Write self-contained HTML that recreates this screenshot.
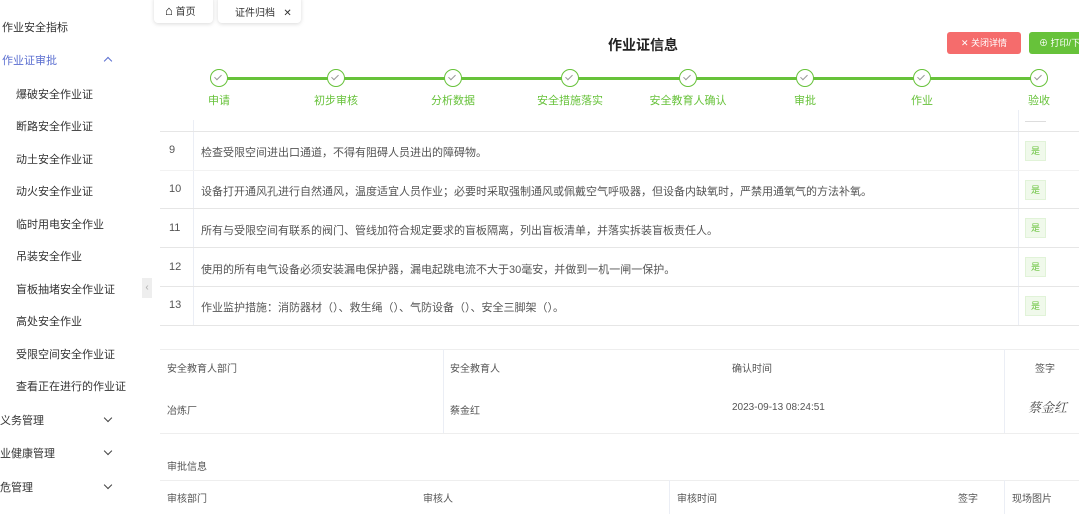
<!DOCTYPE html>
<html><head><meta charset="utf-8"><style>
*{margin:0;padding:0;box-sizing:border-box}
body{width:1079px;height:514px;overflow:hidden;background:#fff;font-family:"Liberation Sans","Noto Sans CJK SC",sans-serif;color:#333;font-size:11px;position:relative}
.a{position:absolute;white-space:nowrap}
.side{font-size:11px;color:#333}
.step{position:absolute;top:69px;width:18px;height:18px;border:1.5px solid #67c23a;border-radius:50%;background:#fff}
.step:after{content:"";position:absolute;left:5px;top:3px;width:3px;height:6px;border-right:1px solid #999;border-bottom:1px solid #999;transform:rotate(45deg)}
.sl{position:absolute;top:92px;color:#67c23a;font-size:11px;transform:translateX(-50%)}
.hl{position:absolute;height:1px;background:#e6e6e6}
.vl{position:absolute;width:1px;background:#ebeef5}
.yes{position:absolute;left:1025px;width:21px;height:20px;background:#f0f9eb;border:1px solid #e1f3d8;color:#67c23a;font-size:9px;text-align:center;line-height:18px}
.t{color:#555}
.chev{position:absolute;width:6px;height:6px;border-right:1.3px solid #444;border-bottom:1.3px solid #444;transform:rotate(45deg)}
.chev.up{transform:rotate(-135deg);border-color:#5a6ed0}
</style></head><body>
<!-- sidebar -->
<div class="a side" style="left:2px;top:19px">作业安全指标</div>
<div class="a side" style="left:2px;top:52px;color:#5a6ed0">作业证审批</div>
<div class="chev up" style="left:105px;top:58px"></div>
<div class="a side" style="left:16px;top:86px">爆破安全作业证</div>
<div class="a side" style="left:16px;top:118px">断路安全作业证</div>
<div class="a side" style="left:16px;top:151px">动土安全作业证</div>
<div class="a side" style="left:16px;top:183px">动火安全作业证</div>
<div class="a side" style="left:16px;top:216px">临时用电安全作业</div>
<div class="a side" style="left:16px;top:248px">吊装安全作业</div>
<div class="a side" style="left:16px;top:281px">盲板抽堵安全作业证</div>
<div class="a side" style="left:16px;top:313px">高处安全作业</div>
<div class="a side" style="left:16px;top:346px">受限空间安全作业证</div>
<div class="a side" style="left:16px;top:378px">查看正在进行的作业证</div>
<div class="a side" style="left:0;top:412px">义务管理</div>
<div class="a side" style="left:0;top:445px">业健康管理</div>
<div class="a side" style="left:0;top:479px">危管理</div>
<div class="chev" style="left:105px;top:415px"></div>
<div class="chev" style="left:105px;top:448px"></div>
<div class="chev" style="left:105px;top:482px"></div>
<div class="a" style="left:142px;top:278px;width:10px;height:20px;background:#eee;color:#aaa;font-size:10px;text-align:center;line-height:20px">&#8249;</div>
<!-- tabs -->
<div class="a" style="left:154px;top:-4px;width:59px;height:27px;border-radius:4px;box-shadow:0 1px 4px rgba(0,0,0,.15);background:#fff;font-size:10px;padding:7px 0 0 11px"><span style="font-size:13px;color:#111">&#8962;</span> 首页</div>
<div class="a" style="left:218px;top:-4px;width:83px;height:27px;border-radius:4px;box-shadow:0 1px 4px rgba(0,0,0,.15);background:#fff;font-size:10px;padding:8px 0 0 17px">证件归档 &nbsp;&nbsp;✕</div>
<!-- title -->
<div class="a" style="left:608px;top:35px;font-size:14px;color:#222;font-weight:bold">作业证信息</div>
<div class="a" style="left:947px;top:32px;width:74px;height:22px;background:#f56c6c;border-radius:3px;color:#fff;font-size:9px;text-align:center;line-height:22px">✕ 关闭详情</div>
<div class="a" style="left:1029px;top:32px;width:60px;height:22px;background:#67c23a;border-radius:3px;color:#fff;font-size:9px;line-height:22px;padding-left:10px">⊕ 打印/下</div>
<!-- steps -->
<div class="a" style="left:220px;top:77px;width:820px;height:3px;background:#67c23a"></div>
<div class="step" style="left:210px"></div><div class="sl" style="left:219px">申请</div>
<div class="step" style="left:327px"></div><div class="sl" style="left:336px">初步审核</div>
<div class="step" style="left:444px"></div><div class="sl" style="left:453px">分析数据</div>
<div class="step" style="left:561px"></div><div class="sl" style="left:570px">安全措施落实</div>
<div class="step" style="left:679px"></div><div class="sl" style="left:688px">安全教育人确认</div>
<div class="step" style="left:796px"></div><div class="sl" style="left:805px">审批</div>
<div class="step" style="left:913px"></div><div class="sl" style="left:922px">作业</div>
<div class="step" style="left:1030px"></div><div class="sl" style="left:1039px">验收</div>
<!-- table -->
<div class="vl" style="left:193px;top:120px;height:205px"></div>
<div class="vl" style="left:1018px;top:110px;height:215px"></div>
<div class="hl" style="left:160px;top:131px;width:919px"></div>
<div class="hl" style="left:160px;top:170px;width:919px;background:#f2f2f2"></div>
<div class="hl" style="left:160px;top:208px;width:919px"></div>
<div class="hl" style="left:160px;top:247px;width:919px"></div>
<div class="hl" style="left:160px;top:286px;width:919px"></div>
<div class="hl" style="left:160px;top:325px;width:919px"></div>
<div class="a t" style="left:169px;top:144px">9</div>
<div class="a t" style="left:201px;top:144px">检查受限空间进出口通道，不得有阻碍人员进出的障碍物。</div>
<div class="a t" style="left:169px;top:183px">10</div>
<div class="a t" style="left:201px;top:183px">设备打开通风孔进行自然通风，温度适宜人员作业；必要时采取强制通风或佩戴空气呼吸器，但设备内缺氧时，严禁用通氧气的方法补氧。</div>
<div class="a t" style="left:169px;top:222px">11</div>
<div class="a t" style="left:201px;top:222px">所有与受限空间有联系的阀门、管线加符合规定要求的盲板隔离，列出盲板清单，并落实拆装盲板责任人。</div>
<div class="a t" style="left:169px;top:261px">12</div>
<div class="a t" style="left:201px;top:261px">使用的所有电气设备必须安装漏电保护器，漏电起跳电流不大于30毫安，并做到一机一闸一保护。</div>
<div class="a t" style="left:169px;top:299px">13</div>
<div class="a t" style="left:201px;top:299px">作业监护措施：消防器材（）、救生绳（）、气防设备（）、安全三脚架（）。</div>
<div class="yes" style="top:141px">是</div>
<div class="yes" style="top:180px">是</div>
<div class="yes" style="top:218px">是</div>
<div class="yes" style="top:257px">是</div>
<div class="yes" style="top:296px">是</div>
<div class="hl" style="left:1025px;top:121px;width:21px;background:#ddd"></div>
<!-- education table -->
<div class="hl" style="left:160px;top:349px;width:919px;background:#eee"></div>
<div class="hl" style="left:160px;top:433px;width:919px;background:#eee"></div>
<div class="vl" style="left:443px;top:349px;height:84px"></div>
<div class="vl" style="left:1004px;top:349px;height:84px"></div>
<div class="a t" style="left:167px;top:360px;font-size:10px">安全教育人部门</div>
<div class="a t" style="left:450px;top:360px;font-size:10px">安全教育人</div>
<div class="a t" style="left:732px;top:360px;font-size:10px">确认时间</div>
<div class="a t" style="left:1035px;top:360px;font-size:10px">签字</div>
<div class="a t" style="left:167px;top:402px;font-size:10px">冶炼厂</div>
<div class="a t" style="left:450px;top:402px;font-size:10px">蔡金红</div>
<div class="a t" style="left:732px;top:402px;font-size:10px">2023-09-13 08:24:51</div>
<div class="a" style="left:1028px;top:397px;font-size:13px;color:#444;font-family:'Noto Serif CJK SC',serif;font-style:italic">蔡金红</div>
<div class="a t" style="left:167px;top:458px;font-size:10px">审批信息</div>
<div class="hl" style="left:160px;top:480px;width:919px;background:#eee"></div>
<div class="vl" style="left:669px;top:480px;height:34px"></div>
<div class="vl" style="left:1004px;top:480px;height:34px"></div>
<div class="a t" style="left:167px;top:490px;font-size:10px">审核部门</div>
<div class="a t" style="left:423px;top:490px;font-size:10px">审核人</div>
<div class="a t" style="left:677px;top:490px;font-size:10px">审核时间</div>
<div class="a t" style="left:958px;top:490px;font-size:10px">签字</div>
<div class="a t" style="left:1012px;top:490px;font-size:10px">现场图片</div>
</body></html>
